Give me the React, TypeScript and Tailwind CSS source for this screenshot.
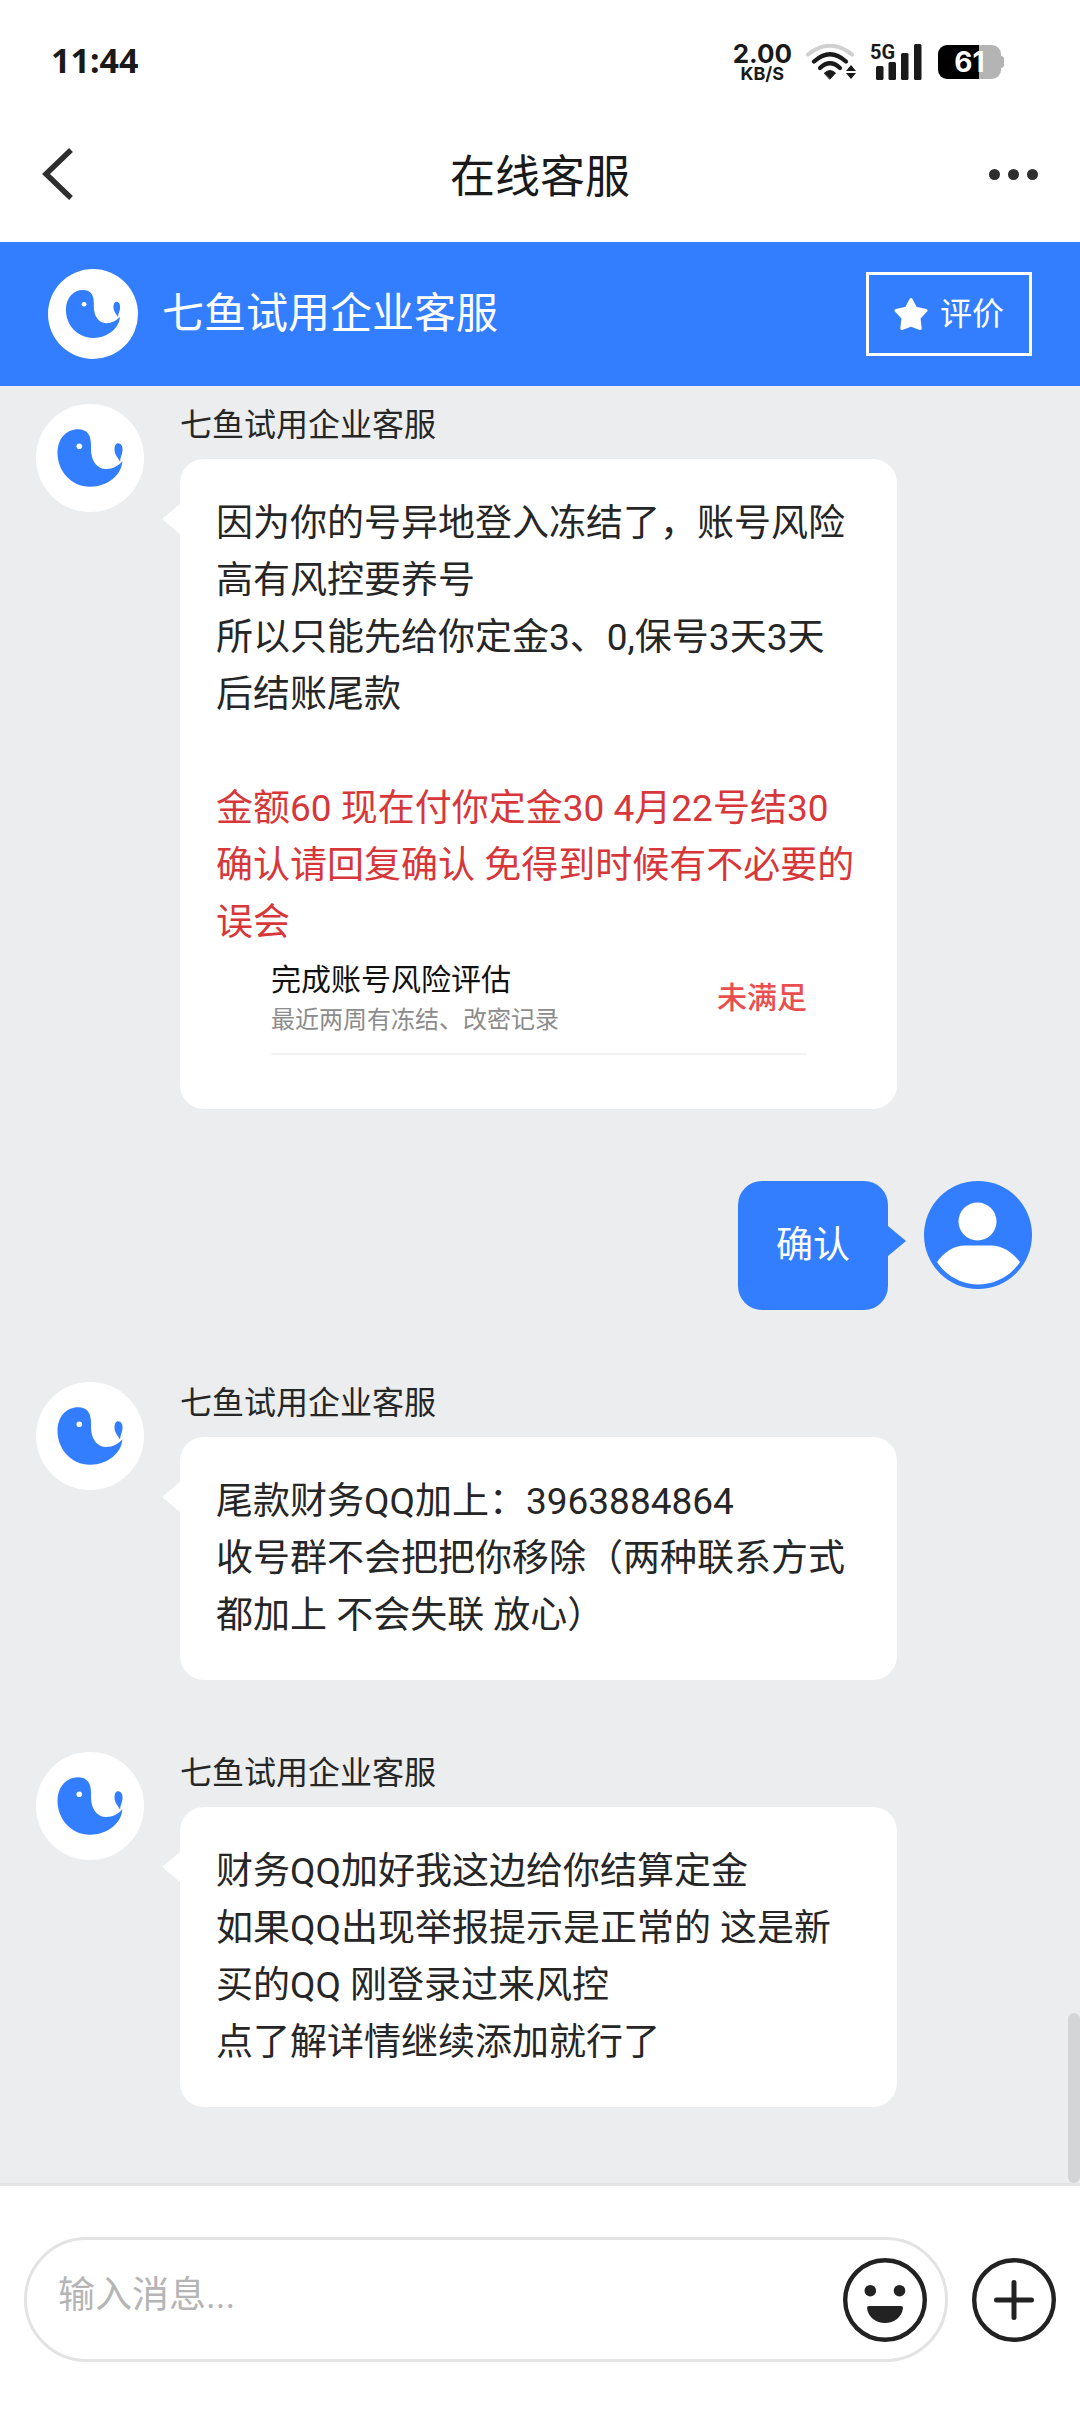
import { useState } from 'react';
import type { ReactNode } from 'react';

type Message = {
  id: number;
  from: 'agent' | 'user';
  body: ReactNode;
};

const AGENT_NAME = '七鱼试用企业客服';

function FishLogo({ className }: { className: string }) {
  return (
    <svg viewBox="0 0 108 108" className={className} aria-hidden="true">
      <circle cx="54" cy="54" r="54" fill="#fff" />
      <path
        d="M21.5 49C21.5 34 31 25.3 42 25.3C52 25.3 55 32 55 41V45C55 57 61 65 70 65C77 65 83 61.5 86.3 57C86 70.5 72 82.7 54 82.7C35 82.7 21.5 67 21.5 49Z"
        fill="#337eff"
      />
      <path d="M82 39.3C85.2 39.3 87 42.5 86.5 47C86 51 84.4 53 84 57.5C82 54 78.5 50.5 78.5 45.5C78.5 42 79.8 39.3 82 39.3Z" fill="#337eff" />
      <circle cx="43.3" cy="42.3" r="2.8" fill="#fff" />
    </svg>
  );
}

function UserAvatar() {
  return (
    <svg viewBox="0 0 108 108" className="size-27 shrink-0" aria-hidden="true">
      <circle cx="54" cy="54" r="54" fill="#337eff" />
      <circle cx="53.5" cy="40.5" r="19" fill="#fff" />
      <path d="M13 81C20 71 30 64.5 41 64.5H67C78 64.5 88 71 96 81C86 96 70 103.5 54 103.5C38 103.5 22 95 13 81Z" fill="#fff" />
    </svg>
  );
}

function StatusBar() {
  return (
    <div className="flex h-31 items-center justify-between pr-19 pl-[51px] text-[#1a1a1a]">
      <span className="pb-1 font-['Noto_Sans',sans-serif] text-[34px] leading-10 font-bold">11:44</span>
      <div className="flex items-center gap-[14px] font-['Inter',sans-serif]">
        <div className="flex flex-col items-center font-bold">
          <span className="text-[26px] leading-6">2.00</span>
          <span className="text-[18px] leading-4">KB/S</span>
        </div>
        <svg viewBox="0 0 50 36" className="h-9 w-[50px]" fill="none" strokeLinecap="round" aria-hidden="true">
          <path d="M2 10.5Q24 -7 46 10.5" stroke="#d0d0d0" strokeWidth="4" />
          <path d="M8 17.5Q24 3 40 17.5" stroke="#1a1a1a" strokeWidth="4.2" />
          <path d="M14 24Q24 14.5 34 24" stroke="#1a1a1a" strokeWidth="4.2" />
          <path d="M18.5 29Q24 24 29.5 29L24 35Z" fill="#1a1a1a" stroke="#1a1a1a" strokeWidth="1" />
          <path d="M45 21L50 27H40ZM45 35L50 29H40Z" fill="#1a1a1a" />
        </svg>
        <div className="relative h-9 w-[54px]">
          <span className="absolute top-0 left-0 font-['Roboto',sans-serif] text-[20px] leading-4 font-bold">5G</span>
          <svg viewBox="0 0 54 36" className="h-9 w-[54px]" fill="#1a1a1a" aria-hidden="true">
            <rect x="6" y="22" width="7.5" height="14" rx="1.5" />
            <rect x="18.5" y="18" width="7.5" height="18" rx="1.5" />
            <rect x="31" y="9" width="7.5" height="27" rx="1.5" />
            <rect x="44" y="0" width="7.5" height="36" rx="1.5" />
          </svg>
        </div>
        <div className="flex items-center">
          <div className="flex h-[34px] w-[63px] items-center justify-center rounded-[9px] bg-linear-to-r from-black from-65% to-[#b4b4b4] to-65% text-[28px] leading-8 font-bold text-white">
            61
          </div>
          <div className="h-3 w-[3px] rounded-r bg-[#b4b4b4]" />
        </div>
      </div>
    </div>
  );
}

function AgentMessage({ children }: { children: ReactNode }) {
  return (
    <article className="flex items-start gap-9 pr-[183px] pl-9">
      <FishLogo className="size-27 shrink-0" />
      <div className="min-w-0 flex-1">
        <h2 className="h-[55px] text-[32px] leading-[42px]">{AGENT_NAME}</h2>
        <div className="relative rounded-3xl bg-white p-9 text-[37px] leading-[57px]">
          <svg viewBox="0 0 18 30" className="absolute top-[45px] -left-[18px] h-[30px] w-[18px]" aria-hidden="true">
            <path d="M18 0V30L0 15Z" fill="#fff" />
          </svg>
          {children}
        </div>
      </div>
    </article>
  );
}

function UserMessage({ children }: { children: ReactNode }) {
  return (
    <article className="flex items-start justify-end gap-9 pr-12">
      <div className="relative rounded-3xl bg-[#337eff] px-[38px] py-9 text-[37px] leading-[57px] text-white">
        {children}
        <svg viewBox="0 0 18 30" className="absolute top-[45px] -right-[18px] h-[30px] w-[18px]" aria-hidden="true">
          <path d="M0 0V30L18 15Z" fill="#337eff" />
        </svg>
      </div>
      <UserAvatar />
    </article>
  );
}

function RiskCard() {
  return (
    <div className="mr-[54px] ml-[55px] flex h-[122px] flex-col">
      <div className="flex h-[104px] items-center justify-between border-b-2 border-[#f3f3f3]">
        <div className="pb-1">
          <p className="text-[30px] leading-10 text-[#111]">完成账号风险评估</p>
          <p className="text-[24px] leading-10 text-[#8c8c8c]">最近两周有冻结、改密记录</p>
        </div>
        <span className="pb-2 text-[30px] leading-10 font-medium text-[#ea4f4f]">未满足</span>
      </div>
    </div>
  );
}

const messages: Message[] = [
  {
    id: 1,
    from: 'agent',
    body: (
      <>
        <p>因为你的号异地登入冻结了，账号风险高有风控要养号</p>
        <p>所以只能先给你定金3、0,保号3天3天后结账尾款</p>
        <br />
        <p className="text-[#d7373a]">金额60 现在付你定金30 4月22号结30</p>
        <p className="text-[#d7373a]">确认请回复确认 免得到时候有不必要的误会</p>
        <RiskCard />
      </>
    ),
  },
  { id: 2, from: 'user', body: <p>确认</p> },
  {
    id: 3,
    from: 'agent',
    body: (
      <>
        <p>尾款财务QQ加上：3963884864</p>
        <p>收号群不会把把你移除（两种联系方式都加上 不会失联 放心）</p>
      </>
    ),
  },
  {
    id: 4,
    from: 'agent',
    body: (
      <>
        <p>财务QQ加好我这边给你结算定金</p>
        <p>如果QQ出现举报提示是正常的 这是新买的QQ 刚登录过来风控</p>
        <p>点了解详情继续添加就行了</p>
      </>
    ),
  },
];

function App() {
  const [draft, setDraft] = useState('');

  return (
    <div
      lang="zh-CN"
      className="flex min-h-screen flex-col bg-white font-['Roboto','Noto_Sans_CJK_SC',sans-serif] text-[#262626]"
    >
      <StatusBar />

      {/* 导航栏 */}
      <header className="flex h-[118px] items-start justify-between px-[42px] pt-5">
        <button type="button" aria-label="返回" className="flex h-15 w-16 items-center">
          <svg viewBox="0 0 32 52" className="h-13 w-8" fill="none" stroke="#2e2e2e" strokeWidth="5.5" aria-hidden="true">
            <path d="M29 2L4 26L29 50" />
          </svg>
        </button>
        <h1 className="text-[45px] leading-17 text-[#1a1a1a]">在线客服</h1>
        <button type="button" aria-label="更多" className="flex h-15 w-16 items-center justify-end gap-2">
          <span className="size-[11px] rounded-full bg-[#2e2e2e]" />
          <span className="size-[11px] rounded-full bg-[#2e2e2e]" />
          <span className="size-[11px] rounded-full bg-[#2e2e2e]" />
        </button>
      </header>

      {/* 客服信息 */}
      <section className="flex h-36 items-center bg-[#337eff] px-12 text-white">
        <FishLogo className="size-[90px] shrink-0" />
        <span className="ml-6 flex-1 text-[42px] leading-15">{AGENT_NAME}</span>
        <button
          type="button"
          className="flex h-21 w-[166px] items-center justify-center gap-3 border-3 border-white text-[32px] leading-12"
        >
          <svg viewBox="0 0 34 34" className="size-[34px]" fill="#fff" stroke="#fff" strokeWidth="3" strokeLinejoin="round" aria-hidden="true">
            <path d="M17 2.5L21.6 11.3L32 13.5L25 21L26.2 31.5L17 28L7.8 31.5L9 21L2 13.5L12.4 11.3Z" />
          </svg>
          评价
        </button>
      </section>

      {/* 消息列表 */}
      <main className="relative flex flex-1 flex-col gap-18 bg-[#ebedef] pt-[18px] pb-18">
        {messages.map((message) =>
          message.from === 'agent' ? (
            <AgentMessage key={message.id}>{message.body}</AgentMessage>
          ) : (
            <UserMessage key={message.id}>{message.body}</UserMessage>
          )
        )}
        <div className="absolute right-0 bottom-0 h-[170px] w-3 rounded-full bg-[#d4d5d7]" />
      </main>

      {/* 输入栏 */}
      <footer className="flex items-center gap-6 border-t-3 border-[#e3e3e3] px-6 pt-[51px] pb-[50px]">
        <div className="flex h-[125px] flex-1 items-center rounded-full border-3 border-[#e3e3e3] pr-[18px] pl-[31px]">
          <input
            type="text"
            aria-label="输入消息"
            placeholder="输入消息..."
            value={draft}
            onChange={(e) => setDraft(e.target.value)}
            className="min-w-0 flex-1 pb-2 text-[37px] leading-[57px] outline-none placeholder:text-[#b5b5b5]"
          />
          <button type="button" aria-label="表情">
            <svg viewBox="0 0 84 84" className="size-21" aria-hidden="true">
              <circle cx="42" cy="42" r="39.8" fill="none" stroke="#222" strokeWidth="4.4" />
              <circle cx="27.3" cy="32.7" r="5.8" fill="#222" />
              <circle cx="56.5" cy="32.7" r="5.8" fill="#222" />
              <path d="M26 48H58Q60 48 60 50C59 59 51 65 42 65C33 65 25 59 24 50Q24 48 26 48Z" fill="#222" />
            </svg>
          </button>
        </div>
        <button type="button" aria-label="更多功能">
          <svg viewBox="0 0 84 84" className="size-21" fill="none" stroke="#222" strokeLinecap="round" aria-hidden="true">
            <circle cx="42" cy="42" r="39.8" strokeWidth="4.4" />
            <path d="M42 24.5V59.5M24.5 42H59.5" strokeWidth="5" />
          </svg>
        </button>
      </footer>
    </div>
  );
}

export default App;
